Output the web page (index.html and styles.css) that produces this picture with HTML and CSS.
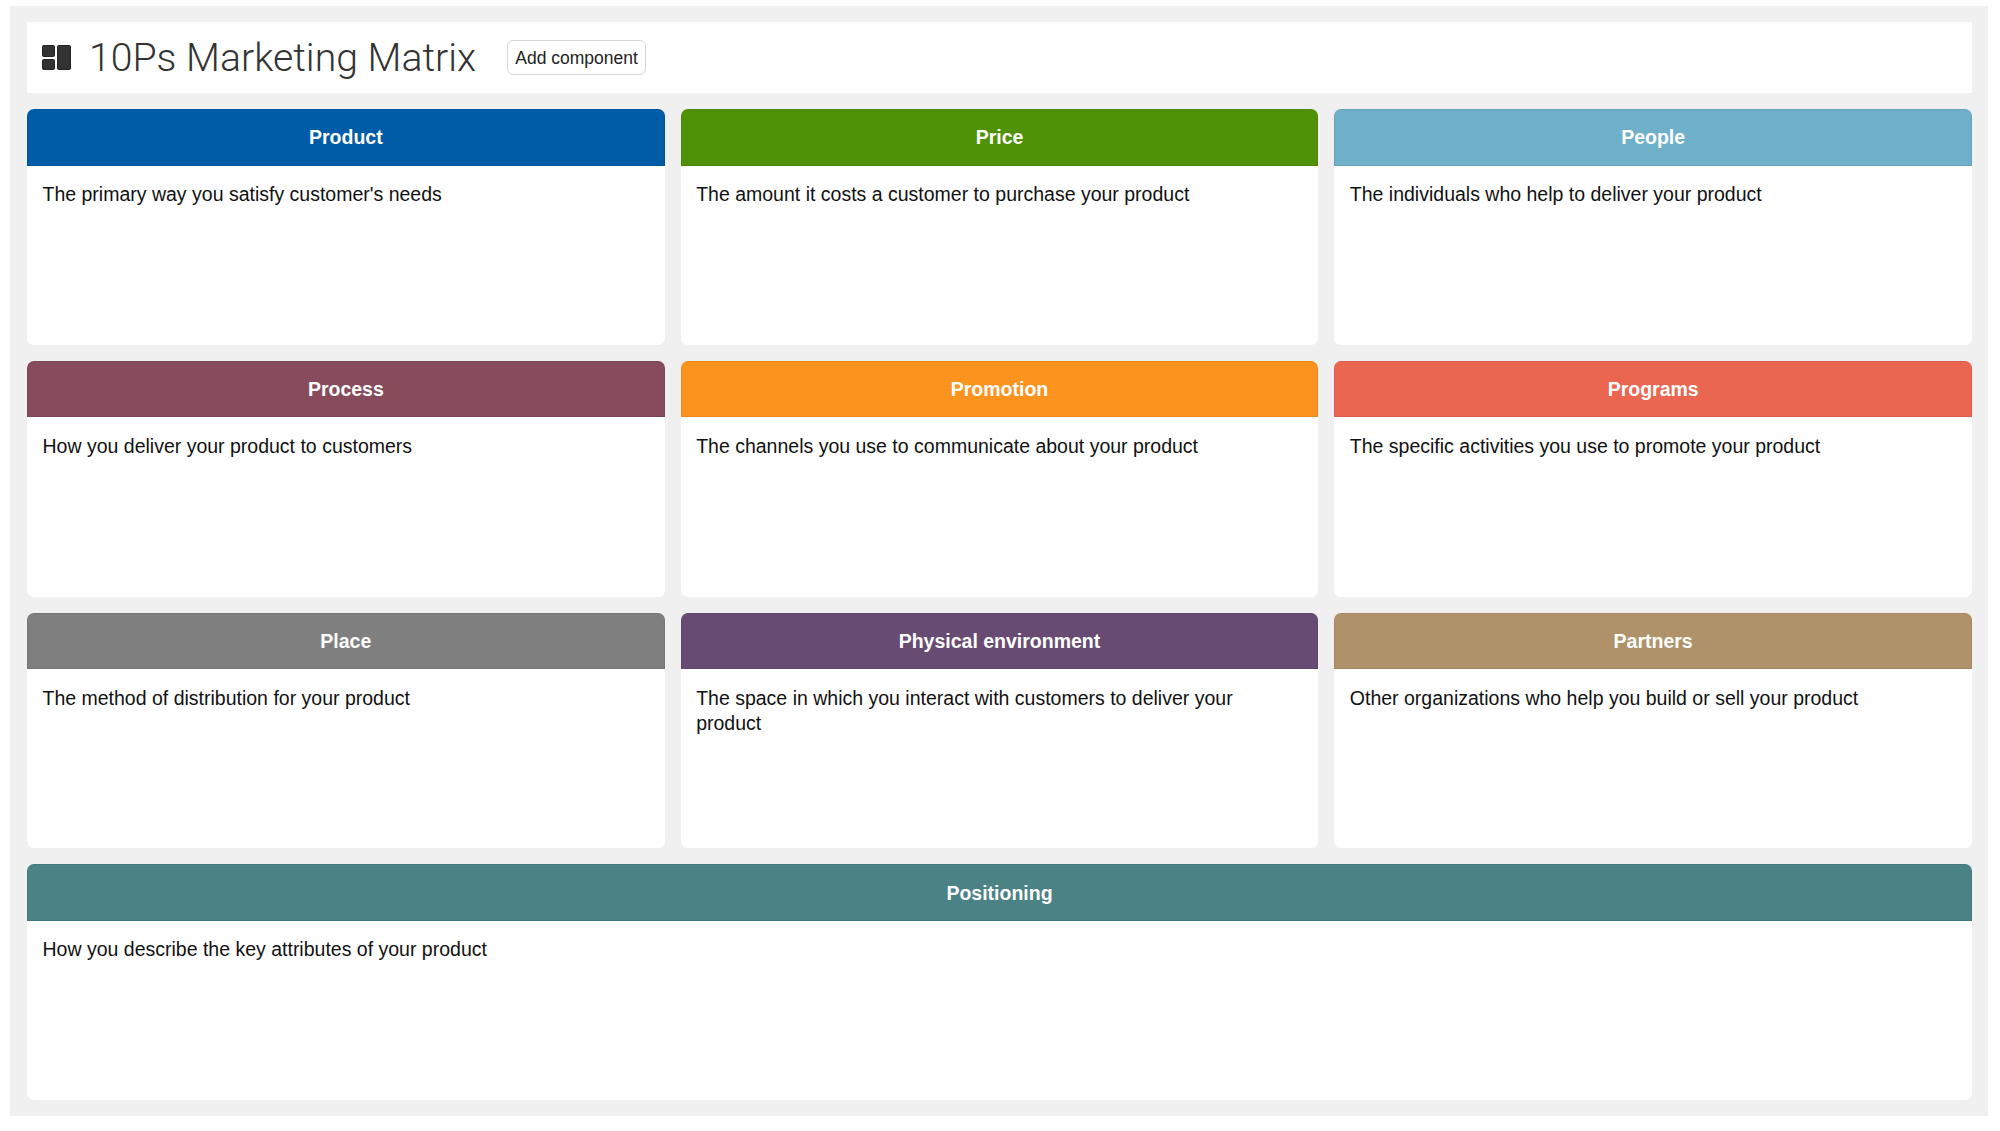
FILE: index.html
```html
<!DOCTYPE html>
<html lang="en">
<head>
<meta charset="utf-8">
<title>10Ps Marketing Matrix</title>
<link rel="stylesheet" href="styles.css">
</head>
<body>
<main class="board">
  <header class="topbar">
    <svg class="logo" viewBox="0 0 29 25" width="29" height="25" aria-hidden="true">
      <rect x="0.5" y="0.5" width="12" height="11" rx="1.2"/>
      <rect x="0.5" y="14.5" width="12" height="10" rx="1.2"/>
      <rect x="15.5" y="0.5" width="13" height="24" rx="1.2"/>
    </svg>
    <h1 class="title">10Ps Marketing Matrix</h1>
    <button class="add-btn" type="button">Add component</button>
  </header>
  <section class="matrix">
    <article class="card"><h2 class="card-head product">Product</h2><p class="card-body">The primary way you satisfy customer's needs</p></article>
    <article class="card"><h2 class="card-head price">Price</h2><p class="card-body">The amount it costs a customer to purchase your product</p></article>
    <article class="card"><h2 class="card-head people">People</h2><p class="card-body">The individuals who help to deliver your product</p></article>
    <article class="card"><h2 class="card-head process">Process</h2><p class="card-body">How you deliver your product to customers</p></article>
    <article class="card"><h2 class="card-head promotion">Promotion</h2><p class="card-body">The channels you use to communicate about your product</p></article>
    <article class="card"><h2 class="card-head programs">Programs</h2><p class="card-body">The specific activities you use to promote your product</p></article>
    <article class="card"><h2 class="card-head place">Place</h2><p class="card-body">The method of distribution for your product</p></article>
    <article class="card"><h2 class="card-head physical">Physical environment</h2><p class="card-body">The space in which you interact with customers to deliver your product</p></article>
    <article class="card"><h2 class="card-head partners">Partners</h2><p class="card-body">Other organizations who help you build or sell your product</p></article>
    <article class="card wide"><h2 class="card-head positioning">Positioning</h2><p class="card-body">How you describe the key attributes of your product</p></article>
  </section>
</main>
</body>
</html>
```
FILE: styles.css
```css
* { box-sizing: border-box; }
html, body { height: 100%; }
body {
  margin: 0;
  padding: 6px 12px 15px 10px;
  background: #fff;
  font-family: "Liberation Sans", Arial, sans-serif;
  color: #111;
}
.board {
  height: 100%;
  background: #f0f0f0;
  padding: 16px 16px 16px 17px;
  display: flex;
  flex-direction: column;
  gap: 16px;
}
.topbar {
  height: 71px;
  flex: none;
  background: #fff;
  display: flex;
  align-items: center;
  padding-left: 15px;
}
.logo { flex: none; fill: #333; stroke: #222; stroke-width: 1; }
.title {
  margin: 0 31px 0 18px;
  font-family: Roboto, "Liberation Sans", sans-serif;
  font-weight: 300;
  font-size: 39.2px;
  color: #333;
}
.add-btn {
  height: 35px;
  width: 139px;
  padding: 1px 0 0;
  border: 1px solid #d6d6d6;
  border-radius: 6px;
  background: #fff;
  font-family: "Liberation Sans", Arial, sans-serif;
  font-size: 17.5px;
  color: #222;
}
.matrix {
  flex: 1;
  min-height: 0;
  display: grid;
  grid-template-columns: repeat(3, 1fr);
  grid-template-rows: repeat(4, 1fr);
  gap: 16px;
}
.card {
  background: #fff;
  border-radius: 7px;
  overflow: hidden;
}
.wide { grid-column: 1 / -1; }
.card-head {
  margin: 0;
  height: 56.5px;
  padding-top: 1px;
  border: 1px solid rgba(0, 0, 0, 0.07);
  display: flex;
  align-items: center;
  justify-content: center;
  font-size: 19.5px;
  font-weight: 700;
  color: #fff;
}
.card-body {
  margin: 0;
  padding: 16.5px 16px 16px 15.5px;
  font-size: 19.5px;
  line-height: 25px;
}
.product { background: #005ca6; }
.price { background: #4f9207; }
.people { background: #6eafc9; }
.process { background: #884b5c; }
.promotion { background: #fd931f; }
.programs { background: #ea6651; }
.place { background: #7f7f7f; }
.physical { background: #674b73; }
.partners { background: #b0926a; }
.positioning { background: #4a8286; }
```
